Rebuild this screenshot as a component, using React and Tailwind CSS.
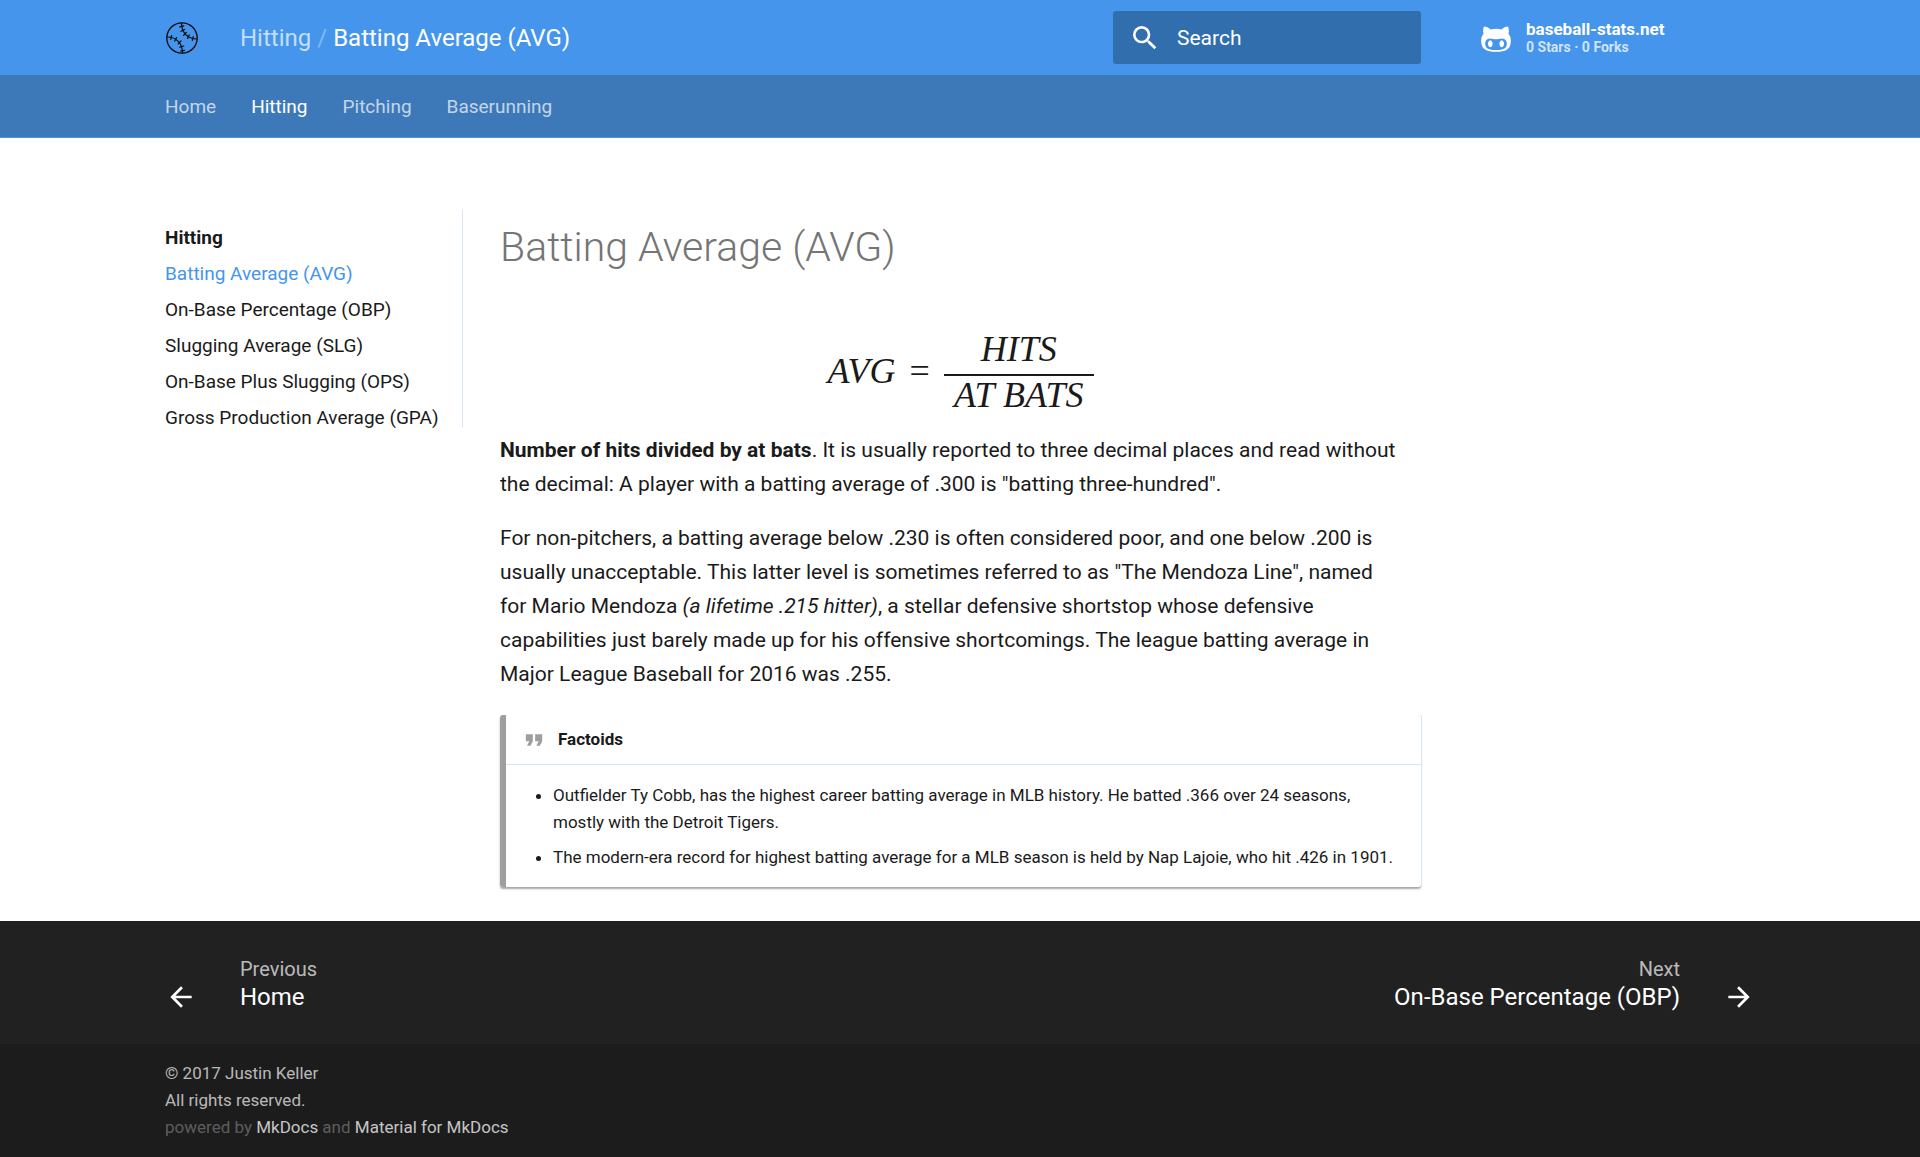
const TABS = ["Home", "Hitting", "Pitching", "Baserunning"];

const PAGES = [
  "Batting Average (AVG)",
  "On-Base Percentage (OBP)",
  "Slugging Average (SLG)",
  "On-Base Plus Slugging (OPS)",
  "Gross Production Average (GPA)",
];

function BaseballLogo() {
  return (
    <svg viewBox="0 0 32 32" className="size-8" fill="none" stroke="#0b0b0b" strokeLinecap="round" aria-hidden="true">
      <circle cx="16" cy="16" r="15.200" strokeWidth="1.300" />
      <g strokeWidth="1.200">
        <path d="M15.500 1C15.500 10 21 17 31 17" />
        <path d="M1 15C11 15 16.500 22 16.500 31" />
        <path d="M13.800 4.800L17.800 3.800M14.900 9.300L18.600 7.500M17.600 13.400L20.300 10.500M21.500 16.500L23.200 12.900M26.300 18.500L27.200 14.600" />
        <path d="M4.800 17.400L5.700 13.500M8.800 19.100L10.500 15.500M12.200 21.800L15 19M13.800 25.300L17.700 24M14.500 29L18.400 28.400" />
      </g>
    </svg>
  );
}

function SearchIcon() {
  return (
    <svg viewBox="0 0 24 24" className="size-8 shrink-0 fill-white" aria-hidden="true">
      <path d="M15.5 14h-.79l-.28-.27A6.47 6.47 0 0 0 16 9.5 6.5 6.5 0 1 0 9.500 16c1.610 0 3.090-.59 4.230-1.570l.27.28v.79l5 4.990L20.490 19l-4.990-5zm-6 0C7.010 14 5 11.990 5 9.500S7.010 5 9.500 5 14 7.010 14 9.500 11.990 14 9.500 14z" />
    </svg>
  );
}

function OctofaceIcon() {
  return (
    <svg viewBox="0 0 416 448" className="h-8 w-[30px] shrink-0 fill-white" aria-hidden="true">
      <path d="M160 304q0 10-3.125 20.5t-10.75 19T128 352t-18.125-8.5-10.75-19T96 304t3.125-20.5 10.75-19T128 256t18.125 8.5 10.75 19T160 304zm160 0q0 10-3.125 20.5t-10.75 19T288 352t-18.125-8.5-10.75-19T256 304t3.125-20.5 10.75-19T288 256t18.125 8.5 10.75 19T320 304zm40 0q0-30-17.25-51T296 232q-10.250 0-48.750 5.250Q229.500 240 208 240t-39.250-2.750Q130.750 232 120 232q-29.500 0-46.750 21T56 304q0 22 8 38.375t20.250 25.750 30.500 15 35 7.375 37.250 1.750h42q20.500 0 37.250-1.750t35-7.375 30.500-15 20.250-25.750T360 304zm56-44q0 51.750-15.250 82.750-9.500 19.250-26.375 33.250t-35.250 21.500-42.500 11.875-42.875 5.500T212 416q-19.500 0-35.500-.75t-36.875-3.125-38.125-7.500-34.250-12.875T37 371.500t-21.500-28.750Q0 312 0 260q0-59.250 34-99-6.750-20.500-6.750-42.500 0-29 12.750-54.500 27 0 47.500 9.875t47.250 30.875Q171.500 96 212 96q37 0 70 8 26.250-20.500 46.750-30.250T376 64q12.750 25.500 12.750 54.500 0 21.750-6.750 42 34 40 34 99.500z" />
    </svg>
  );
}

function Arrow({ flip }) {
  return (
    <svg viewBox="0 0 24 24" className={flip ? "size-8 shrink-0 rotate-180 fill-white" : "size-8 shrink-0 fill-white"} aria-hidden="true">
      <path d="M20 11H7.830l5.590-5.590L12 4l-8 8 8 8 1.410-1.410L7.830 13H20v-2z" />
    </svg>
  );
}

function Header() {
  return (
    <header className="bg-[#4595ec] text-white">
      <div className="mx-auto flex h-[75px] max-w-[1590px] items-center">
        <a href="#home" aria-label="Home" className="w-[75px] shrink-0 pl-px">
          <BaseballLogo />
        </a>
        <div className="min-w-0 flex-1 text-2xl">
          <span className="text-white/70">Hitting</span>
          <span className="px-1.5 text-white/35">/</span>
          <span>Batting Average (AVG)</span>
        </div>
        <label className="flex h-[53px] w-[308px] items-center rounded-[3px] bg-[#306ead] px-4">
          <SearchIcon />
          <input
            type="text"
            aria-label="Search"
            placeholder="Search"
            className="ml-4 min-w-0 flex-1 bg-transparent pt-0.5 text-[21px] text-white outline-none placeholder:text-white"
          />
        </label>
        <a href="#repository" className="ml-[60px] flex w-[274px] items-center gap-[15px] font-bold">
          <OctofaceIcon />
          <span className="flex flex-col pb-0.5">
            <span className="text-[17px] leading-5">baseball-stats.net</span>
            <span className="text-sm leading-4 text-white/75">0 Stars · 0 Forks</span>
          </span>
        </a>
      </div>
      <div className="border-b border-[#4595ec] bg-[#3d79b9]">
        <nav className="mx-auto flex h-[62px] max-w-[1590px] items-center gap-[35px] pt-0.5 text-[19px]">
          {TABS.map((tab) => (
            <a key={tab} href="#tab" className={tab === "Hitting" ? "text-white" : "text-white/70"}>
              {tab}
            </a>
          ))}
        </nav>
      </div>
    </header>
  );
}

function Sidebar() {
  return (
    <nav className="w-[298px] shrink-0 self-start border-r border-[#dbe6f0] pt-[18px] text-[19px] leading-5">
      <p className="font-bold">Hitting</p>
      <ul className="mt-4 space-y-4">
        {PAGES.map((page, i) => (
          <li key={page}>
            <a href="#page" className={i === 0 ? "text-[#4595ec]" : ""}>
              {page}
            </a>
          </li>
        ))}
      </ul>
    </nav>
  );
}

function Formula() {
  return (
    <div className="mt-[53px] flex items-center justify-center gap-3.5 font-['Liberation_Serif',serif] text-[36px] leading-[42px] italic">
      <span>AVG</span>
      <span className="not-italic">=</span>
      <span className="flex flex-col text-center">
        <span className="border-b-2 border-[#1a1a1a] px-2.5 pb-1">HITS</span>
        <span className="px-2.5 leading-[38px]">AT BATS</span>
      </span>
    </div>
  );
}

function Factoids() {
  return (
    <section className="mt-6 rounded-[3px] border-l-[6px] border-[#9e9e9e] text-[17px] shadow-[1px_0_0_#d8e6f2,0_2px_2px_rgba(0,0,0,0.35)]">
      <h2 className="flex h-[50px] items-center gap-2.5 border-b border-[#d3e3f1] pl-3.5 font-bold">
        <svg viewBox="0 0 24 24" className="size-7 fill-[#9e9e9e]" aria-hidden="true">
          <path d="M14 17h3l2-4V7h-6v6h3M6 17h3l2-4V7H5v6h3l-2 4z" />
        </svg>
        Factoids
      </h2>
      <ul className="list-disc space-y-2 pt-[17px] pr-4 pb-4 pl-[47px] leading-[27px]">
        <li>
          Outfielder Ty Cobb, has the highest career batting average in MLB history. He batted .366 over 24 seasons,
          mostly with the Detroit Tigers.
        </li>
        <li>
          The modern-era record for highest batting average for a MLB season is held by Nap Lajoie, who hit .426 in
          1901.
        </li>
      </ul>
    </section>
  );
}

function Footer() {
  return (
    <footer className="flex-1 bg-[#1c1c1c] text-white">
      <div className="border-b border-[#232323] bg-[#212121]">
        <div className="mx-auto flex h-[122px] max-w-[1590px] items-end justify-between pb-[30px]">
          <a href="#previous" className="flex items-end gap-[43px]">
            <Arrow />
            <span className="flex flex-col">
              <span className="text-xl leading-6 text-white/70">Previous</span>
              <span className="text-2xl leading-8">Home</span>
            </span>
          </a>
          <a href="#next" className="flex items-end gap-[43px] text-right">
            <span className="flex flex-col">
              <span className="text-xl leading-6 text-white/70">Next</span>
              <span className="text-2xl leading-8">On-Base Percentage (OBP)</span>
            </span>
            <Arrow flip />
          </a>
        </div>
      </div>
      <div className="mx-auto max-w-[1590px] py-4 text-[17px] leading-[27px] text-white/70">
        <p>© 2017 Justin Keller</p>
        <p>All rights reserved.</p>
        <p className="text-white/30">
          powered by{" "}
          <a href="#mkdocs" className="text-white/75">MkDocs</a> and{" "}
          <a href="#material" className="text-white/75">Material for MkDocs</a>
        </p>
      </div>
    </footer>
  );
}

export default function App() {
  return (
    <div className="flex min-h-screen flex-col bg-white font-[Roboto,sans-serif] text-[#1a1a1a]">
      <Header />
      <main className="mx-auto flex w-full max-w-[1590px] pt-[72px] pb-[34px]">
        <Sidebar />
        <article className="min-w-0 flex-1 pl-[37px]">
          <h1 className="pt-[9px] text-[41px] leading-[56px] font-light text-[#757575]">Batting Average (AVG)</h1>
          <Formula />
          <div className="mt-[19px] space-y-5 pr-5 text-[21px] leading-[34px]">
            <p>
              <strong className="font-bold">Number of hits divided by at bats</strong>. It is usually reported to three
              decimal places and read without the decimal: A player with a batting average of .300 is "batting
              three-hundred".
            </p>
            <p>
              For non-pitchers, a batting average below .230 is often considered poor, and one below .200 is usually
              unacceptable. This latter level is sometimes referred to as "The Mendoza Line", named for Mario Mendoza{" "}
              <em>(a lifetime .215 hitter)</em>, a stellar defensive shortstop whose defensive capabilities just barely
              made up for his offensive shortcomings. The league batting average in Major League Baseball for 2016 was
              .255.
            </p>
          </div>
          <Factoids />
        </article>
        <div className="w-[334px] shrink" />
      </main>
      <Footer />
    </div>
  );
}
